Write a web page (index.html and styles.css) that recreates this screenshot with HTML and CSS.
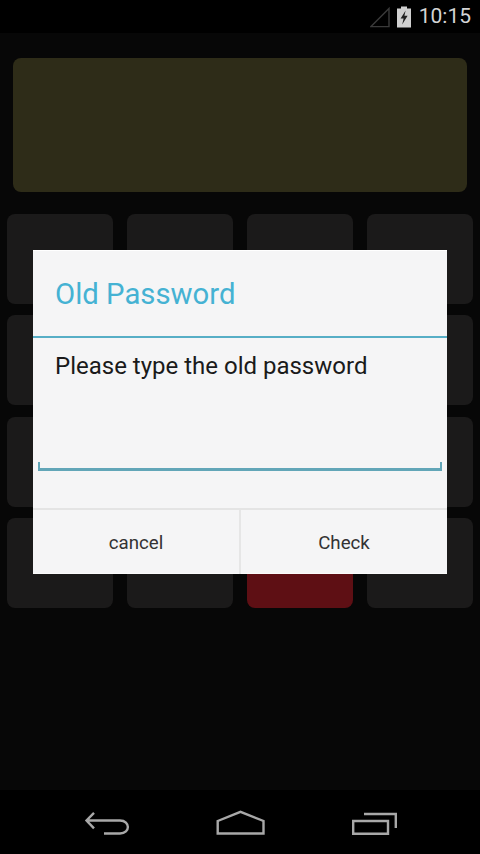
FILE: index.html
```html
<!DOCTYPE html>
<html lang="en">
<head>
<meta charset="utf-8">
<title>Old Password</title>
<link rel="stylesheet" href="styles.css">
</head>
<body>
<div class="screen">
  <header class="status">
    <svg class="signal" width="20" height="22" viewBox="0 0 20 22"><path d="M1 20.6 L19 2.5 V20.6 Z" fill="none" stroke="#3a3a3a" stroke-width="1.4"/></svg>
    <svg class="battery" width="14" height="22" viewBox="0 0 14 22"><path d="M4 0.5h6v2h4v19H0v-19h4z" fill="#d0d0d0"/><path d="M8.6 4.5 L3.6 12.5 H6.6 L5.2 18.5 L10.6 9.8 H7.4 Z" fill="#222"/></svg>
    <span class="clock">10:15</span>
  </header>
  <main class="app">
    <div class="display"></div>
    <div class="keys">
      <div class="key"></div><div class="key"></div><div class="key"></div><div class="key"></div>
      <div class="key"></div><div class="key"></div><div class="key"></div><div class="key"></div>
      <div class="key"></div><div class="key"></div><div class="key"></div><div class="key"></div>
      <div class="key"></div><div class="key"></div><div class="key key-red"></div><div class="key"></div>
    </div>
  </main>
  <nav class="navbar">
    <svg width="46" height="26" viewBox="0 0 46 26"><path d="M10 3.8 L2.5 11.5 L10 19.4 M2.5 11.5 H36 C46.5 11.5 46.5 24.5 36 24.5 H20" fill="none" stroke="#a8a8a8" stroke-width="2.4"/></svg>
    <svg width="50" height="26" viewBox="0 0 50 26"><path d="M1.7 12 L24.5 2.8 L47.5 12 V24.5 H1.7 Z" fill="none" stroke="#a8a8a8" stroke-width="2.4"/></svg>
    <svg width="46" height="26" viewBox="0 0 46 26"><path d="M2.2 12 H37 V24.8 H2.2 Z M13 5 H44.8 V19" fill="none" stroke="#a8a8a8" stroke-width="2.4"/></svg>
  </nav>
  <section class="dialog">
    <h1 class="dialog-title">Old Password</h1>
    <div class="dialog-body">
      <p class="dialog-msg">Please type the old password</p>
      <div class="dialog-input"></div>
    </div>
    <div class="dialog-actions">
      <div class="action">cancel</div>
      <div class="action">Check</div>
    </div>
  </section>
</div>
</body>
</html>
```
FILE: styles.css
```css
* { box-sizing: border-box; }
html, body { margin: 0; padding: 0; background: #000; }
.screen {
  position: relative;
  width: 480px;
  height: 854px;
  display: flex;
  flex-direction: column;
  background: #070707;
  font-family: Roboto, "Liberation Sans", sans-serif;
  overflow: hidden;
}
.status {
  height: 33px;
  background: #000;
  display: flex;
  align-items: center;
  justify-content: flex-end;
  padding-right: 9px;
  flex: none;
}
.signal { margin-right: 7px; }
.battery { margin-right: 8px; }
.clock { color: #d4d4d4; font-size: 21px; line-height: 33px; }
.app {
  flex: 1;
  padding: 25px 7px 0;
  display: flex;
  flex-direction: column;
}
.display {
  height: 134px;
  margin: 0 6px 22px;
  border-radius: 8px;
  background: #2e2c18;
}
.keys {
  display: grid;
  grid-template-columns: repeat(4, 106px);
  grid-auto-rows: 90px;
  column-gap: 14px;
  row-gap: 11.34px;
}
.key { border-radius: 8px; background: #1b1a1a; }
.key-red { background: #5e0f14; }
.navbar {
  height: 64px;
  flex: none;
  background: #000;
  display: flex;
  align-items: center;
  padding: 0 83px 0 84px;
  justify-content: space-between;
}
.dialog {
  position: absolute;
  left: 33px;
  top: 250px;
  width: 414px;
  height: 324px;
  background: #f5f5f6;
  box-shadow: inset 0 1px 0 #fff, inset 0 -1px 0 #fbfbfb;
  display: flex;
  flex-direction: column;
}
.dialog-title {
  margin: 0;
  height: 87.5px;
  padding-left: 22px;
  font-size: 29.3px;
  font-weight: 400;
  line-height: 88px;
  color: #45b2d3;
  border-bottom: 2.5px solid #57aec6;
}
.dialog-body { height: 172.5px; padding: 13.5px 5px 0; border-bottom: 2px solid #e4e4e4; }
.dialog-msg {
  margin: 0 0 0 17px;
  height: 37px;
  font-size: 24px;
  line-height: 30px;
  color: #1a1a1a;
}
.dialog-input {
  height: 83px;
  position: relative;
  border-bottom: 3px solid #62a6b8;
}
.dialog-input::before,
.dialog-input::after {
  content: "";
  position: absolute;
  bottom: 0;
  width: 2px;
  height: 6px;
  background: #62a6b8;
}
.dialog-input::before { left: 0; }
.dialog-input::after { right: 0; }
.dialog-actions { flex: 1; display: flex; }
.action {
  flex: 1;
  display: flex;
  align-items: center;
  justify-content: center;
  font-size: 18.7px;
  padding-top: 2px;
  color: #333;
}
.action + .action { border-left: 2px solid #e6e6e6; }
```
